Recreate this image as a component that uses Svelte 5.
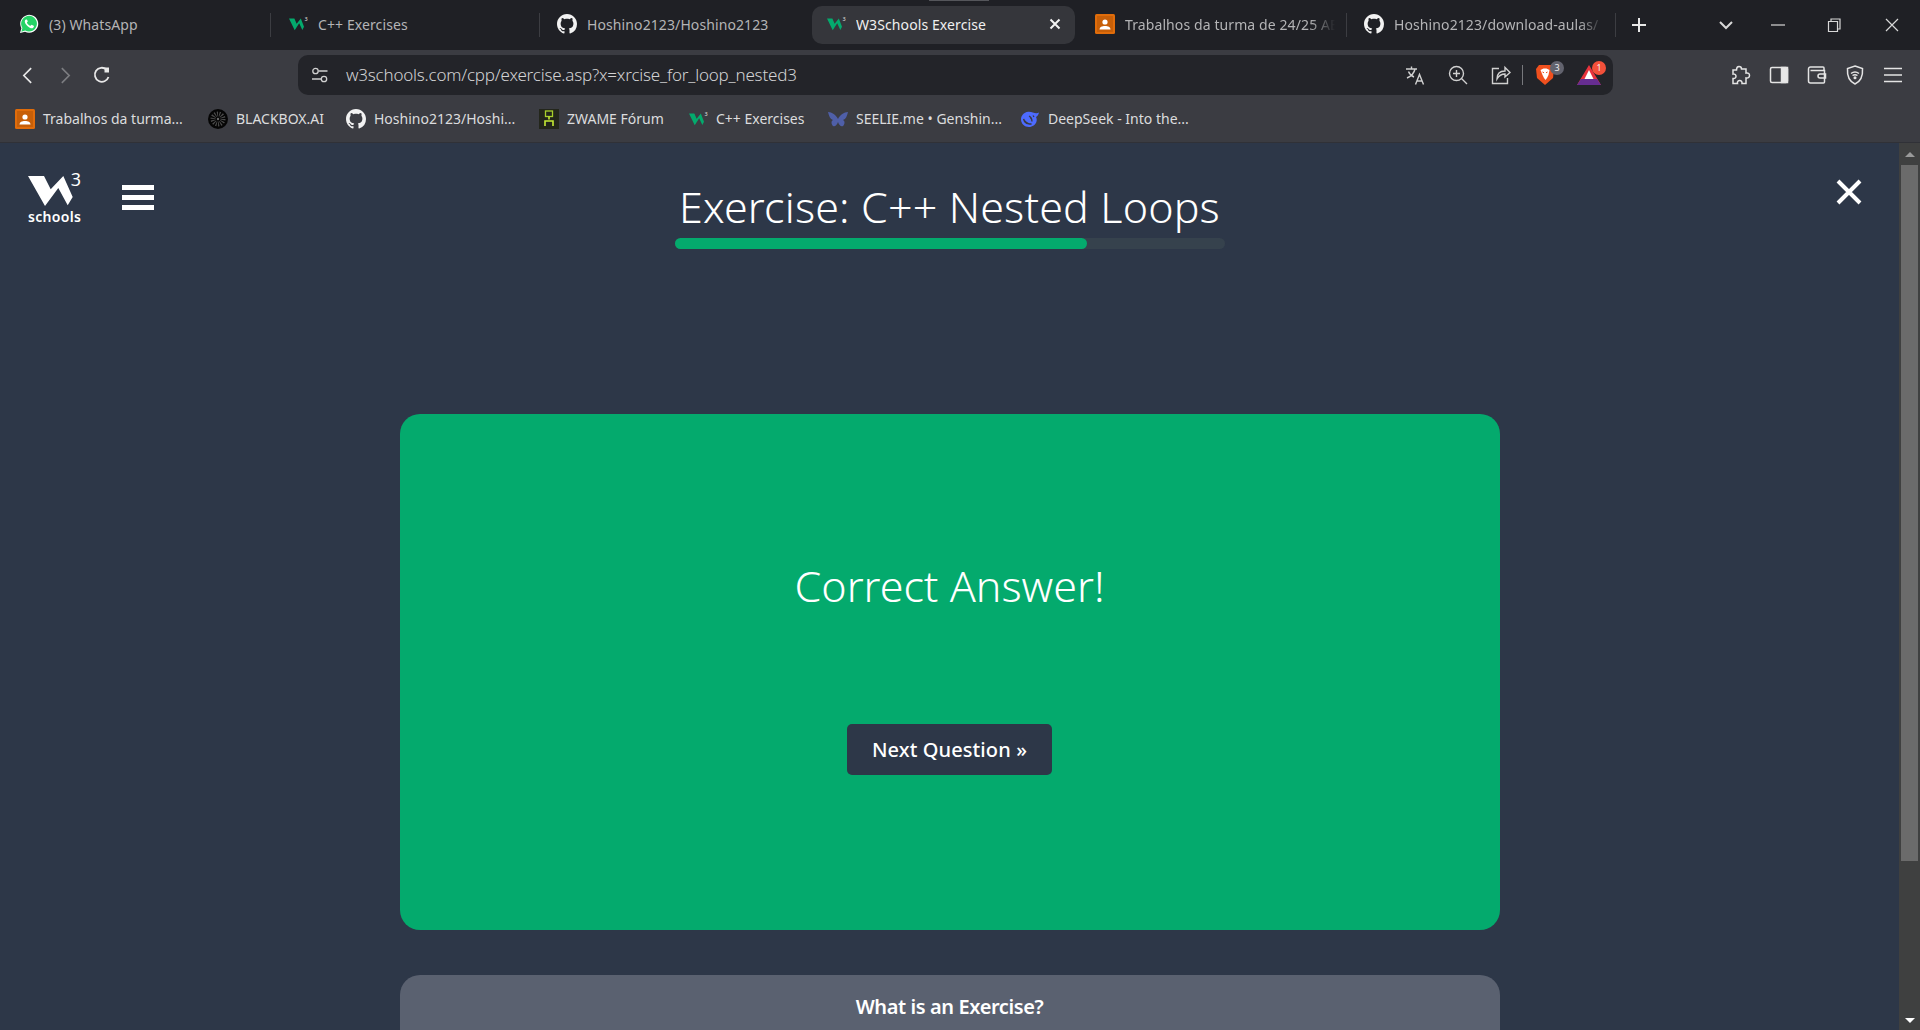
<script>
    const tabs = [
        { icon: 'whatsapp', title: '(3) WhatsApp' },
        { icon: 'w3', title: 'C++ Exercises' },
        { icon: 'github', title: 'Hoshino2123/Hoshino2123' },
        { icon: 'w3', title: 'W3Schools Exercise', active: true },
        { icon: 'classroom', title: 'Trabalhos da turma de 24/25 AE' },
        { icon: 'github', title: 'Hoshino2123/download-aulas/' }
    ];

    const bookmarks = [
        { icon: 'classroom', title: 'Trabalhos da turma...', width: 193 },
        { icon: 'blackbox', title: 'BLACKBOX.AI', width: 138 },
        { icon: 'github', title: 'Hoshino2123/Hoshi...', width: 193 },
        { icon: 'zwame', title: 'ZWAME Fórum', width: 149 },
        { icon: 'w3', title: 'C++ Exercises', width: 140 },
        { icon: 'seelie', title: 'SEELIE.me • Genshin...', width: 192 },
        { icon: 'deepseek', title: 'DeepSeek - Into the...', width: 190 }
    ];

    const progress = 75;
</script>

{#snippet favicon(name)}
    {#if name === 'whatsapp'}
        <svg class="fav" viewBox="0 0 20 20">
            <path d="M1 19l1.400-4.800A9 9 0 1 1 6 17.700z" fill="#fff" />
            <path d="M2.300 17.700l1.100-3.700A7.900 7.900 0 1 1 6.200 16.600z" fill="#25d366" />
            <path d="M7 5.500c-.4 0-1.200.7-1.200 2s1 3 2.600 4.500 3.300 2.300 4.400 2.300 2.100-1 2.100-1.800-.1-.6-.3-.8l-2-1c-.3 0-.8.900-1.100 1.100-.3.100-1.400-.4-2.300-1.300S7.900 8.700 8 8.400c.2-.3.900-.8.800-1.100L8 5.700c-.2-.2-.6-.2-1-.2z" fill="#fff" />
        </svg>
    {:else if name === 'w3'}
        <svg class="fav w3-fav" viewBox="0 0 22 20">
            <polygon points="0,4 5.900,4 8.400,9.700 13,4 16.500,13 14.700,16.600 11.200,9.200 6.300,17" fill="#04aa6d" />
            <text x="17" y="7" class="fav-three">3</text>
        </svg>
    {:else if name === 'github'}
        <svg class="fav" viewBox="0 0 16 16">
            <path fill="#f2f2f2" d="M8 0C3.580 0 0 3.580 0 8c0 3.540 2.290 6.530 5.470 7.590.4.070.55-.17.55-.38 0-.19-.01-.82-.01-1.490-2.010.37-2.530-.49-2.690-.94-.09-.23-.48-.94-.82-1.130-.28-.15-.68-.52-.01-.53.63-.01 1.080.58 1.230.82.72 1.210 1.870.87 2.330.66.070-.52.28-.87.51-1.070-1.780-.2-3.640-.89-3.640-3.950 0-.87.31-1.590.82-2.150-.08-.2-.36-1.020.08-2.120 0 0 .67-.21 2.200.82.64-.18 1.320-.27 2-.27.68 0 1.360.09 2 .27 1.530-1.040 2.200-.82 2.200-.82.44 1.100.16 1.920.08 2.120.51.56.82 1.270.82 2.150 0 3.070-1.870 3.750-3.650 3.950.29.25.54.73.54 1.480 0 1.070-.01 1.930-.01 2.200 0 .21.15.46.55.38A8.013 8.013 0 0 0 16 8c0-4.420-3.580-8-8-8z" />
        </svg>
    {:else if name === 'classroom'}
        <svg class="fav" viewBox="0 0 20 20">
            <rect width="20" height="20" rx="1.500" fill="#e06c0a" />
            <rect x="2" y="2" width="16" height="16" fill="#c75f08" />
            <circle cx="10" cy="8" r="2.600" fill="#fff" />
            <path d="M4.500 15.500c0-2.400 2.500-3.500 5.500-3.500s5.500 1.100 5.500 3.500z" fill="#fff" />
        </svg>
    {:else if name === 'blackbox'}
        <svg class="fav" viewBox="0 0 20 20">
            <circle cx="10" cy="10" r="10" fill="#050505" />
            <circle cx="10" cy="10" r="5" fill="none" stroke="#4c4c4c" stroke-width="5" stroke-dasharray="1 1.200" />
            <circle cx="10" cy="10" r="1.200" fill="#6a6a6a" />
        </svg>
    {:else if name === 'zwame'}
        <svg class="fav" viewBox="0 0 20 20">
            <rect width="20" height="20" fill="#23261b" />
            <rect x="6.500" y="2" width="7" height="5.500" fill="none" stroke="#a8cf2c" stroke-width="1.300" />
            <path d="M10 7.500v3M6 17v-5h8v5" fill="none" stroke="#c5ec35" stroke-width="1.600" />
        </svg>
    {:else if name === 'seelie'}
        <svg class="fav" viewBox="0 0 20 20">
            <path d="M0 3c4 0 8 3 10 7 2-4 6-7 10-7-1 4-2 7-5 8 2 1 2 4 0 6-2 1-4-1-5-4-1 3-3 5-5 4-2-2-2-5 0-6C2 10 1 7 0 3z" fill="#4f5fa8" />
        </svg>
    {:else if name === 'deepseek'}
        <svg class="fav" viewBox="0 0 20 20">
            <path d="M19 3.500c-1 .6-1.800.9-2.700.8-2.300 0-5-1.800-8-1.500C3.500 3.400 1 7 1 10.500 1 14.500 4.500 18 9 18c3.500 0 6.500-2.300 7.500-5.500.5-1.500.2-3.200-.5-4.500 1.500-.8 2.500-2.500 3-4.500z" fill="#4d6bfe" />
            <path d="M3.500 10c2 3.500 5 5 8 5-3 .5-5.500-.5-7-2.500zM9 7c2 1 3 3 3 5.500M13 6.500l1 1.500" stroke="#3a3b41" stroke-width="1.300" fill="#3a3b41" />
        </svg>
    {/if}
{/snippet}

<div class="browser">
    <div class="tabstrip">
        <div class="tabs">
            {#each tabs as tab}
                <div class="tab" class:active={tab.active}>
                    {@render favicon(tab.icon)}
                    <span class="tab-title">{tab.title}</span>
                    {#if tab.active}
                        <svg class="tab-close" viewBox="0 0 12 12"><path d="M1.500 1.500l9 9m0-9l-9 9" /></svg>
                    {/if}
                </div>
            {/each}
        </div>
        <svg class="new-tab" viewBox="0 0 14 14"><path d="M7 0v14M0 7h14" /></svg>
        <div class="win-controls">
            <svg class="win chevron" viewBox="0 0 14 14"><path d="M1 4l6 6 6-6" stroke-width="2" /></svg>
            <svg class="win" viewBox="0 0 14 14"><path d="M0 7h14" /></svg>
            <svg class="win restore" viewBox="0 0 14 14"><path d="M1.500 3.500h9v10h-9zM4 3.500V1h9v10h-2.500" /></svg>
            <svg class="win" viewBox="0 0 14 14"><path d="M1 1l12 12M13 1L1 13" /></svg>
        </div>
    </div>

    <div class="toolbar">
        <div class="nav-buttons">
            <svg class="nav" viewBox="0 0 12 18"><path d="M10 1L2 9l8 8" /></svg>
            <svg class="nav dim" viewBox="0 0 12 18"><path d="M2 1l8 8-8 8" /></svg>
            <svg class="reload" viewBox="0 0 20 20"><path d="M16.500 12a7 7 0 1 1-2-7.500" /><path d="M12.500 2.500h4.500v5h-4.500z" fill="#e8e8e8" stroke="none" /></svg>
        </div>
        <div class="urlbar">
            <svg class="tune" viewBox="0 0 18 16"><circle cx="4.500" cy="4" r="2.700" /><path d="M7.500 4h9M1 12h9" /><circle cx="13" cy="12" r="2.700" /></svg>
            <span class="url">w3schools.com/cpp/exercise.asp?x=xrcise_for_loop_nested3</span>
            <div class="url-actions">
                <svg class="act" viewBox="0 0 20 20">
                    <path d="M1 4h11M6.500 1.500V4M10 4c-.8 4-3.500 7-8 9M3.500 6.500c1 2.500 3 4.500 5.500 5.500" />
                    <path d="M10.500 19.500l4-10 4 10M12 16h5" />
                </svg>
                <svg class="act" viewBox="0 0 20 20"><circle cx="8.500" cy="8.500" r="7" /><path d="M13.500 13.500l5.500 5.500M8.500 5v7M5 8.500h7" /></svg>
                <svg class="act" viewBox="0 0 20 20"><path d="M8 3.500H1.500v15h15V13M6 14c0-5 3-8 8-8V2.500L19 7.500l-5 4.500V9c-3.500 0-6 1.500-8 5z" /></svg>
                <span class="act-sep"></span>
                <div class="badged brave">
                    <svg viewBox="0 0 18 22">
                        <path d="M3 1h12l3 4-1 9-8 7-8-7-1-9z" fill="#f0501e" />
                        <path d="M4.500 6l3-1.500h3l3 1.500-1 5-1.500 3-1.500 2-1.500-2-1.500-3z" fill="#fff" />
                        <path d="M6.500 8l1.500.8M11.500 8l-1.500.8" stroke="#f0501e" stroke-width="1" />
                    </svg>
                    <span class="badge grey">3</span>
                </div>
                <div class="badged bat">
                    <svg viewBox="0 0 24 20">
                        <polygon points="12,0 24,20 0,20" fill="#e8323c" />
                        <polygon points="0,20 24,20 20,14 4,14" fill="#662d91" />
                        <polygon points="12,5 16.500,14 7.500,14" fill="#fff" />
                    </svg>
                    <span class="badge red">1</span>
                </div>
            </div>
        </div>
        <div class="extensions">
            <svg class="ext" viewBox="0 0 20 20"><path d="M8 1.500c1.500 0 2.500 1 2.500 2.500h4.500v4c2.500-.5 3.500 1 3.500 2.500s-1.200 3-3.500 2.500V18.500h-4c.3-2-.9-3-2.300-3s-2.700 1-2.200 3H2v-5c2 .3 3-.9 3-2.200S3.800 8.500 2 9V5h3.500C5.500 3 6.500 1.500 8 1.500z" /></svg>
            <svg class="ext" viewBox="0 0 20 20"><rect x="1.500" y="2.500" width="17" height="15" rx="1.500" /><rect x="12.500" y="2.500" width="6" height="15" fill="#e8e8e8" /></svg>
            <svg class="ext" viewBox="0 0 20 20"><path d="M17 5.500V3a1 1 0 0 0-1-1H3.500A2 2 0 0 0 1.500 4v12A2 2 0 0 0 3.500 18h13a1 1 0 0 0 1-1V5.500H3.500" /><path d="M18.500 9H13a1.800 1.800 0 0 0 0 4h5.500z" /></svg>
            <svg class="ext" viewBox="0 0 20 20"><path d="M10 1l7.500 2.500c.5 7-1 12.500-7.500 15.500C3.500 16 2 10.500 2.500 3.500z" /><path d="M6 8.500c2.500-2 5.500-2 8 0M7.500 10.500c1.500-1 3.500-1 5 0" /><circle cx="10" cy="12.800" r=".8" /></svg>
            <svg class="ext" viewBox="0 0 20 20"><path d="M1 3.500h18M1 10h18M1 16.500h18" /></svg>
        </div>
    </div>

    <div class="bookmarks">
        {#each bookmarks as mark}
            <div class="bookmark" style="width: {mark.width}px">
                {@render favicon(mark.icon)}
                <span>{mark.title}</span>
            </div>
        {/each}
    </div>

    <div class="viewport">
        <main class="page">
            <header class="page-head">
                <div class="brand">
                    <div class="logo">
                        <div class="logo-mark">
                            <svg viewBox="0 0 45 30"><polygon points="0,0 16,0 22.700,13.300 35.300,0 44.700,21 39.700,29.300 30.300,12 17,30" fill="#fff" /></svg>
                            <span class="logo-three">3</span>
                        </div>
                        <span class="logo-name">schools</span>
                    </div>
                    <div class="burger"><span></span><span></span><span></span></div>
                </div>
                <div class="heading">
                    <h1>Exercise: C++ Nested Loops</h1>
                    <div class="progress"><div class="progress-fill" style="width: {progress}%"></div></div>
                </div>
                <svg class="close" viewBox="0 0 26 26"><path d="M2 2l22 22M24 2L2 24" /></svg>
            </header>

            <section class="result">
                <h2>Correct Answer!</h2>
                <button class="next">Next Question »</button>
            </section>

            <section class="about">
                <h3>What is an Exercise?</h3>
            </section>
        </main>

        <div class="scrollbar">
            <span class="arrow up"></span>
            <div class="track"><div class="thumb"></div></div>
            <span class="arrow down"></span>
        </div>
    </div>
</div>

<style>
    :global(body) {
        margin: 0;
        overflow: hidden;
        background: #2d3748;
    }

    .browser {
        display: flex;
        flex-direction: column;
        height: 1030px;
        font-family: "Noto Sans", "Open Sans", sans-serif;
    }

    /* tab strip */
    .tabstrip {
        display: flex;
        align-items: center;
        flex: none;
        height: 50px;
        background: #1f2025;
    }

    .tabs {
        display: flex;
        flex: none;
    }

    .tab {
        display: flex;
        align-items: center;
        gap: 10px;
        box-sizing: border-box;
        position: relative;
        width: 269px;
        height: 38px;
        padding-left: 19px;
        padding-right: 10px;
        padding-bottom: 2px;
        color: #b4b4b6;
        font-size: 14px;
        letter-spacing: 0.1px;
    }

    .tab::after {
        content: "";
        position: absolute;
        right: -2px;
        top: 7px;
        bottom: 7px;
        width: 1px;
        background: #3c3d42;
    }

    .tab:nth-child(3)::after,
    .tab:nth-child(4)::after {
        display: none;
    }

    .tab.active {
        margin: 0 1px 0 5px;
        width: 263px;
        padding-left: 14px;
        padding-right: 14px;
        border-radius: 10px;
        background: #35363b;
        color: #f0f0f0;
    }

    .tab.active::before {
        content: "";
        position: absolute;
        top: -6px;
        left: 117px;
        width: 60px;
        height: 1px;
        background: #55565b;
    }

    .tab-title {
        flex: 1;
        min-width: 0;
        overflow: hidden;
        white-space: nowrap;
    }

    .tab:nth-child(5) .tab-title,
    .tab:nth-child(6) .tab-title {
        -webkit-mask-image: linear-gradient(to right, #000 88%, transparent);
        mask-image: linear-gradient(to right, #000 88%, transparent);
    }

    .fav {
        flex: none;
        width: 20px;
        height: 20px;
    }

    .w3-fav {
        transform: translateX(1px);
    }

    .fav-three {
        font-size: 6px;
        font-family: "Noto Sans", sans-serif;
        fill: #e5e5e5;
    }

    .tab-close {
        flex: none;
        width: 12px;
        height: 12px;
        stroke: #f2f2f2;
        stroke-width: 2;
        fill: none;
    }

    .new-tab {
        flex: none;
        width: 14px;
        height: 14px;
        margin-left: 18px;
        stroke: #e8e8e8;
        stroke-width: 2;
        fill: none;
    }

    .win-controls {
        display: flex;
        align-items: center;
        gap: 43px;
        margin-left: auto;
        margin-right: 21px;
    }

    .win {
        width: 14px;
        height: 14px;
        stroke: #d8d8d8;
        stroke-width: 1.200;
        fill: none;
    }

    .chevron {
        margin-right: -5px;
    }

    .restore {
        margin-left: -1px;
        margin-right: 1px;
    }

    /* toolbar */
    .toolbar {
        display: flex;
        flex: none;
        height: 45px;
        background: #3b3c42;
        padding-top: 5px;
        box-sizing: border-box;
    }

    .nav-buttons {
        display: flex;
        align-items: center;
        flex: none;
        width: 298px;
        height: 40px;
        padding-left: 22px;
        box-sizing: border-box;
    }

    .nav {
        width: 11px;
        height: 17px;
        margin-right: 27px;
        stroke: #e8e8e8;
        stroke-width: 1.800;
        fill: none;
    }

    .nav.dim {
        stroke: #7c7d81;
    }

    .reload {
        width: 20px;
        height: 20px;
        margin-left: -6px;
        stroke: #e8e8e8;
        stroke-width: 1.800;
        fill: none;
    }

    .urlbar {
        display: flex;
        align-items: center;
        flex: none;
        width: 1315px;
        height: 40px;
        box-sizing: border-box;
        padding-left: 13px;
        padding-right: 12px;
        border-radius: 10px;
        background: #232429;
    }

    .tune {
        flex: none;
        width: 18px;
        height: 16px;
        margin-right: 17px;
        stroke: #d0d0d0;
        stroke-width: 1.300;
        fill: none;
    }

    .url {
        padding-bottom: 2px;
        font-size: 17px;
        font-weight: 300;
        letter-spacing: -0.2px;
        color: #d2d2d4;
        white-space: nowrap;
    }

    .url-actions {
        display: flex;
        align-items: center;
        gap: 23px;
        margin-left: auto;
    }

    .act {
        width: 20px;
        height: 20px;
        stroke: #d0d0d0;
        stroke-width: 1.400;
        fill: none;
    }

    .act-sep {
        width: 1px;
        height: 20px;
        margin: 0 -12px 0 -12px;
        background: #77787c;
    }

    .badged {
        position: relative;
        height: 22px;
    }

    .badged svg {
        display: block;
        height: 100%;
    }

    .brave {
        width: 18px;
        margin-left: 2px;
    }

    .bat {
        width: 24px;
        height: 20px;
    }

    .badge {
        position: absolute;
        top: -3px;
        right: -10px;
        width: 14px;
        height: 14px;
        border-radius: 50%;
        font-size: 9px;
        line-height: 14px;
        text-align: center;
        color: #eee;
    }

    .badge.grey {
        background: #62636e;
    }

    .badge.red {
        top: -4px;
        right: -5px;
        background: #f2503a;
    }

    .extensions {
        display: flex;
        align-items: center;
        justify-content: flex-end;
        flex: 1;
        gap: 18px;
        height: 40px;
        padding-right: 17px;
    }

    .ext {
        width: 20px;
        height: 20px;
        stroke: #e4e4e4;
        stroke-width: 1.500;
        fill: none;
    }

    /* bookmarks */
    .bookmarks {
        display: flex;
        align-items: center;
        flex: none;
        height: 48px;
        padding-left: 15px;
        box-sizing: border-box;
        background: #3b3c42;
        border-bottom: 1px solid #303137;
    }

    .bookmark {
        display: flex;
        align-items: center;
        gap: 8px;
        flex: none;
        font-size: 14px;
        color: #dcdcde;
        white-space: nowrap;
    }

    /* page */
    .viewport {
        display: flex;
        flex: 1;
        min-height: 0;
    }

    .page {
        display: flex;
        flex-direction: column;
        align-items: center;
        flex: 1;
        min-width: 0;
        overflow: hidden;
        background: #2d3748;
    }

    .page-head {
        display: grid;
        grid-template-columns: 1fr 550px 1fr;
        width: 100%;
        box-sizing: border-box;
        padding: 30px 28px 0;
    }

    .brand {
        display: flex;
        gap: 41px;
    }

    .logo {
        display: flex;
        flex-direction: column;
        width: 53px;
    }

    .logo-mark {
        position: relative;
        height: 36px;
    }

    .logo-mark svg {
        position: absolute;
        left: 0;
        top: 3px;
        width: 45px;
        height: 30px;
    }

    .logo-three {
        position: absolute;
        right: 0;
        top: -6px;
        font-size: 18px;
        line-height: 24px;
        color: #fff;
    }

    .logo-name {
        font-size: 14px;
        font-weight: 600;
        line-height: 16px;
        color: #fff;
        letter-spacing: 0.3px;
    }

    .burger {
        display: flex;
        flex-direction: column;
        gap: 5px;
        width: 32px;
        margin-top: 12px;
    }

    .burger span {
        height: 5px;
        background: #fff;
    }

    .heading {
        display: flex;
        flex-direction: column;
        align-items: center;
        margin-top: 4px;
    }

    h1 {
        margin: 0;
        font-size: 43px;
        font-weight: 300;
        letter-spacing: 0.15px;
        line-height: 60px;
        padding-bottom: 1px;
        color: #fff;
        white-space: nowrap;
    }

    .progress {
        width: 100%;
        height: 11px;
        border-radius: 6px;
        background: #36424d;
    }

    .progress-fill {
        height: 100%;
        border-radius: 6px;
        background: #04aa6d;
    }

    .close {
        justify-self: end;
        width: 26px;
        height: 26px;
        margin-top: 6px;
        margin-right: 9px;
        stroke: #fff;
        stroke-width: 4;
        fill: none;
    }

    .result {
        display: flex;
        flex-direction: column;
        align-items: center;
        flex: none;
        box-sizing: border-box;
        width: 1100px;
        height: 516px;
        margin-top: 165px;
        padding-top: 142px;
        border-radius: 20px;
        background: #04aa6d;
    }

    h2 {
        margin: 0;
        font-size: 43px;
        font-weight: 300;
        line-height: 60px;
        color: #fff;
    }

    .next {
        width: 205px;
        height: 51px;
        margin-top: 108px;
        border: none;
        border-radius: 5px;
        background: #2d3748;
        color: #fff;
        font-family: "Noto Sans", sans-serif;
        font-size: 20px;
        font-weight: 500;
        letter-spacing: 0.1px;
        padding: 0;
    }

    .about {
        flex: none;
        box-sizing: border-box;
        width: 1100px;
        height: 140px;
        margin-top: 45px;
        padding-top: 19px;
        border-radius: 20px 20px 0 0;
        background: #5a6170;
        text-align: center;
    }

    h3 {
        margin: 0;
        font-size: 20px;
        font-weight: 600;
        line-height: 26px;
        letter-spacing: -0.4px;
        color: #fff;
    }

    /* scrollbar */
    .scrollbar {
        display: flex;
        flex-direction: column;
        align-items: center;
        flex: none;
        width: 21px;
        background: #3f4040;
    }

    .arrow {
        flex: none;
        width: 0;
        height: 0;
        border-left: 5px solid transparent;
        border-right: 5px solid transparent;
    }

    .arrow.up {
        margin-top: 9px;
        border-bottom: 5px solid #9a9a9a;
    }

    .arrow.down {
        margin-bottom: 7px;
        border-top: 5px solid #fff;
    }

    .track {
        flex: 1;
        width: 100%;
        padding-top: 8px;
        box-sizing: border-box;
    }

    .thumb {
        width: 17px;
        height: 696px;
        margin: 0 auto;
        background: #6b6b6b;
    }
</style>
